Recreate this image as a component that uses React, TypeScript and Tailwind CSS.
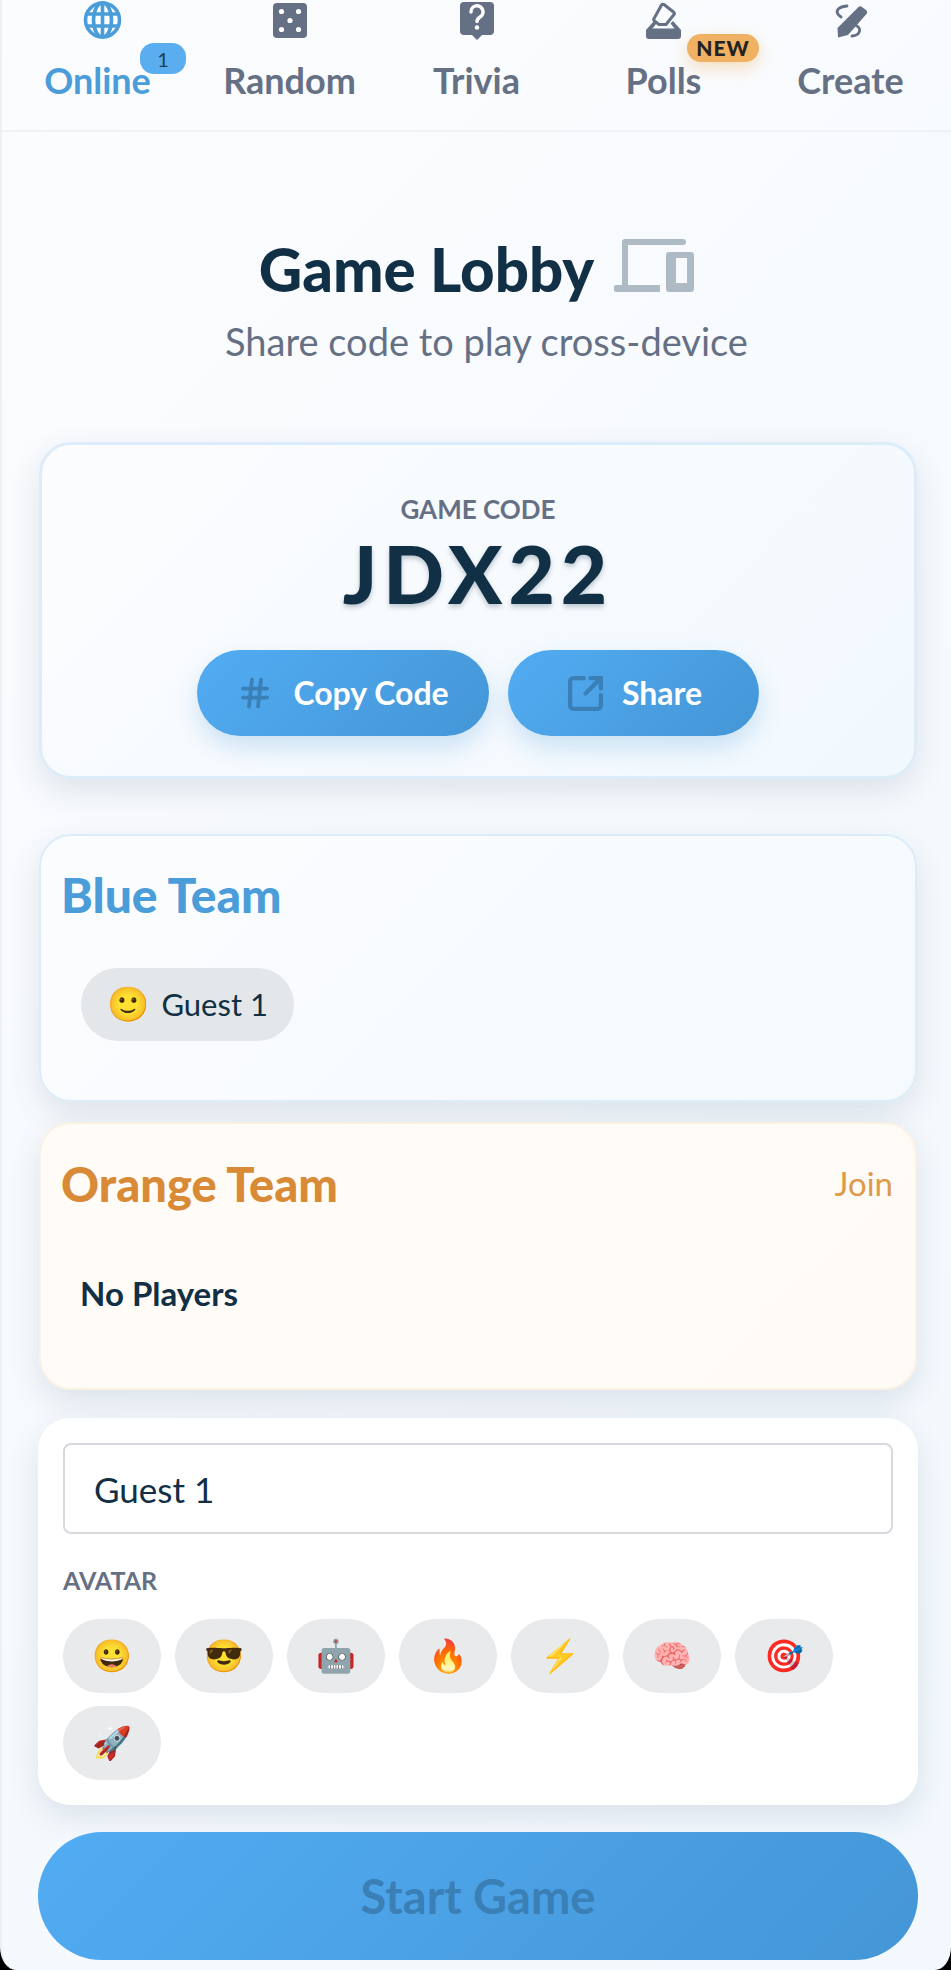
import React from "react";
import { Hash, SquareArrowOutUpRight } from "lucide-react";

const font = "font-['Lato','Liberation_Sans',sans-serif]";
const emojiFont = "font-['Noto_Color_Emoji','DejaVu_Sans',sans-serif]";

const GlobeIcon = () => (
  <svg width="39" height="38" viewBox="0 0 39 38" fill="none" stroke="#4a9dd9" strokeWidth="3.600" className="mt-[1px]">
    <circle cx="19.500" cy="19" r="17" />
    <ellipse cx="19.500" cy="19" rx="9" ry="17" />
    <path d="M19.500 2v34M4 13h31M4 25h31" />
  </svg>
);

const DiceIcon = () => (
  <svg width="34" height="35" viewBox="0 0 34 35" className="mt-[3px]">
    <rect width="34" height="35" rx="4" fill="#667085" />
    <circle cx="8.500" cy="8.500" r="2.600" fill="#fff" />
    <circle cx="25.500" cy="8.500" r="2.600" fill="#fff" />
    <circle cx="17" cy="17.500" r="2.600" fill="#fff" />
    <circle cx="8.500" cy="26.500" r="2.600" fill="#fff" />
    <circle cx="25.500" cy="26.500" r="2.600" fill="#fff" />
  </svg>
);

const TriviaIcon = () => (
  <svg width="34" height="38" viewBox="0 0 34 38" className="mt-[2px]">
    <path d="M4 0h26a4 4 0 0 1 4 4v25a4 4 0 0 1-4 4h-8l-5 5-5-5H4a4 4 0 0 1-4-4V4a4 4 0 0 1 4-4z" fill="#667085" />
    <path d="M11 10a6 6 0 1 1 9 5c-2 1.300-3 2.300-3 4.500" fill="none" stroke="#fff" strokeWidth="3.400" strokeLinecap="round" />
    <circle cx="17" cy="25.500" r="2.200" fill="#fff" />
  </svg>
);

const PollsIcon = () => (
  <svg width="35" height="37" viewBox="0 0 35 37" className="mt-[2px]">
    <path d="M18 2.500l9.500 7.500a2 2 0 0 1 .3 2.800L20 22.500H13l-4.500-3.500a2 2 0 0 1-.3-2.800L15.500 3a2 2 0 0 1 2.500-.5z" fill="none" stroke="#667085" strokeWidth="3" strokeLinejoin="round" />
    <path d="M0 28l8-9 2.500 2.500L6.500 26.500h22l-4-5L27 19l8 9v6a3 3 0 0 1-3 3H3a3 3 0 0 1-3-3z" fill="#667085" />
  </svg>
);

const CreateIcon = () => (
  <svg width="34" height="34" viewBox="0 0 34 34" className="mt-[4px]">
    <path d="M24 3.500a3 3 0 0 1 4-.5l4 3a3 3 0 0 1 .5 4L14 31l-10 2.500-.5-9.500z" fill="#667085" />
    <path d="M13 2C3 3 0 8 7 13M21 21c7 3 6 10-3 11" fill="none" stroke="#667085" strokeWidth="2.800" strokeLinecap="round" />
  </svg>
);

const DevicesIcon = () => (
  <svg width="80" height="53" viewBox="0 0 80 53" fill="#aebbc4" className="mb-[8px]">
    <path d="M8 3a3 3 0 0 1 3-3h58a2.500 2.500 0 0 1 0 6H14v40h32v7H3a3.500 3.500 0 0 1 0-7h5z" />
    <path fillRule="evenodd" d="M55 13h22a3 3 0 0 1 3 3v34a3 3 0 0 1-3 3H55a3 3 0 0 1-3-3V16a3 3 0 0 1 3-3zm7 6v25h11V19z" />
  </svg>
);

const tabs = [
  { label: "Online", icon: <GlobeIcon />, active: true },
  { label: "Random", icon: <DiceIcon /> },
  { label: "Trivia", icon: <TriviaIcon /> },
  { label: "Polls", icon: <PollsIcon /> },
  { label: "Create", icon: <CreateIcon /> },
];

const avatars = ["😀", "😎", "🤖", "🔥", "⚡", "🧠", "🎯", "🚀"];

const blueGradient = "bg-[linear-gradient(135deg,#52acf3,#4496d6)]";
const cardShadow = "shadow-[0_12px_32px_rgba(30,60,90,0.12)]";

export default function App() {
  return (
    <div className={`${font} h-[1970px] w-[951px] overflow-hidden bg-black`}>
      <div className="h-full w-full overflow-hidden rounded-br-[16px_23px] rounded-bl-[16px_23px] border-l-2 border-l-[#eef1f4] bg-[linear-gradient(135deg,#fbfcfe,#f2f8fd)]">
        <nav className="flex h-[132px] items-start border-b-2 border-[#f0f3f6] pl-[7px]">
          {tabs.map((tab) => (
            <div
              key={tab.label}
              className={`relative flex w-[187px] flex-col items-center ${tab.active ? "text-[#4a9dd9]" : "text-[#667085]"}`}
            >
              <div className="flex h-[44px] items-start">{tab.icon}</div>
              <span className={`mt-[15px] text-[36px] leading-[42px] font-bold ${tab.active ? "mr-[10px]" : ""}`}>{tab.label}</span>
              {tab.active && (
                <span className="absolute top-[43px] left-[131px] flex h-[31px] w-[46px] items-center justify-center rounded-[14px] bg-[#5aaef0] text-[20px] text-[#1d3f58]">
                  1
                </span>
              )}
              {tab.label === "Polls" && (
                <span className="absolute top-[34px] left-[117px] flex h-[28px] w-[72px] items-center justify-center rounded-[14px] bg-[#f0b163] pb-[2px] text-[21px] leading-none font-black tracking-[1px] text-[#222] shadow-[0_6px_16px_rgba(240,177,99,0.4)]">
                  NEW
                </span>
              )}
            </div>
          ))}
        </nav>

        <header className="mt-[109px] flex flex-col items-center">
          <div className="flex h-[56px] items-center gap-[20px]">
            <h1 className="text-[60px] leading-none font-black text-[#112f45]">Game Lobby</h1>
            <DevicesIcon />
          </div>
          <p className="mt-[22px] ml-[20px] text-[38px] leading-[44px] text-[#667085]">Share code to play cross-device</p>
        </header>

        <main className="mt-[79px] flex flex-col pr-[33px] pl-[36px]">
          <section className={`mx-[1px] flex h-[337px] flex-col items-center rounded-[32px] border-[3px] border-[#dcedf9] bg-[linear-gradient(135deg,#fbfcfe,#f2f9fe)] ${cardShadow}`}>
            <div className="mt-[49px] text-[26px] leading-[30px] font-bold text-[#667085]">GAME CODE</div>
            <div className="mt-[5px] text-[80px] leading-[88px] font-black tracking-[6px] text-[#112f45] [text-shadow:0_3px_5px_rgba(17,47,69,0.25)]">
              JDX22
            </div>
            <div className="mt-[33px] flex gap-[19px]">
              <button className={`flex h-[86px] w-[292px] items-center justify-center gap-[20px] rounded-full ${blueGradient} text-[32px] font-bold text-white shadow-[0_12px_24px_rgba(74,157,217,0.25)]`}>
                <Hash size={36} strokeWidth={2.500} className="text-[#3a7fb5]" />
                Copy Code
              </button>
              <button className={`flex h-[86px] w-[251px] items-center justify-center gap-[16px] rounded-full ${blueGradient} text-[32px] font-bold text-white shadow-[0_12px_24px_rgba(74,157,217,0.25)]`}>
                <SquareArrowOutUpRight size={41} strokeWidth={2.500} className="text-[#3a7fb5]" />
                Share
              </button>
            </div>
          </section>

          <section className={`mx-[1px] mt-[55px] h-[268px] rounded-[32px] border-2 border-[#dcedf9] bg-[linear-gradient(135deg,#fbfcfe,#f4fafe)] px-[20px] ${cardShadow}`}>
            <h2 className="mt-[34px] text-[48px] leading-[50px] font-black text-[#4a9dd9]">Blue Team</h2>
            <div className="mt-[48px] ml-[20px] flex h-[73px] w-[213px] items-center justify-center gap-[12px] rounded-full bg-[#e4e7ea] text-[31px] text-[#112f45]">
              <span className={`${emojiFont} text-[34px]`}>🙂</span>
              Guest 1
            </div>
          </section>

          <section className={`mx-[1px] mt-[20px] h-[268px] rounded-[32px] border-2 border-[#fbf0e4] bg-[linear-gradient(135deg,#fffbf7,#fefaf6)] px-[20px] ${cardShadow}`}>
            <div className="mt-[35px] flex items-center justify-between pr-[2px]">
              <h2 className="text-[47px] leading-[50px] font-black text-[#d98a36]">Orange Team</h2>
              <span className="text-[33px] text-[#dd9a4a]">Join</span>
            </div>
            <div className="mt-[64px] ml-[19px] text-[33px] leading-[40px] font-bold text-[#112f45]">No Players</div>
          </section>

          <section className={`mt-[28px] flex h-[387px] flex-col rounded-[32px] bg-white px-[25px] pt-[25px] ${cardShadow}`}>
            <input
              readOnly
              value="Guest 1"
              className="h-[91px] w-full rounded-[8px] border-2 border-[#d6d9dd] bg-white px-[29px] text-[35px] text-[#112f45] outline-none"
            />
            <div className="mt-[31px] text-[25px] leading-[30px] font-bold text-[#667085]">AVATAR</div>
            <div className="mt-[24px] flex flex-wrap gap-x-[14px] gap-y-[13px]">
              {avatars.map((a) => (
                <div key={a} className={`${emojiFont} flex h-[74px] w-[98px] items-center justify-center rounded-full bg-[#e9eaec] text-[32px]`}>
                  {a}
                </div>
              ))}
            </div>
          </section>

          <button className={`mt-[27px] flex h-[128px] w-full items-center justify-center rounded-full ${blueGradient} text-[47px] font-bold text-[#3a7fb5]`}>
            Start Game
          </button>
        </main>
      </div>
    </div>
  );
}
